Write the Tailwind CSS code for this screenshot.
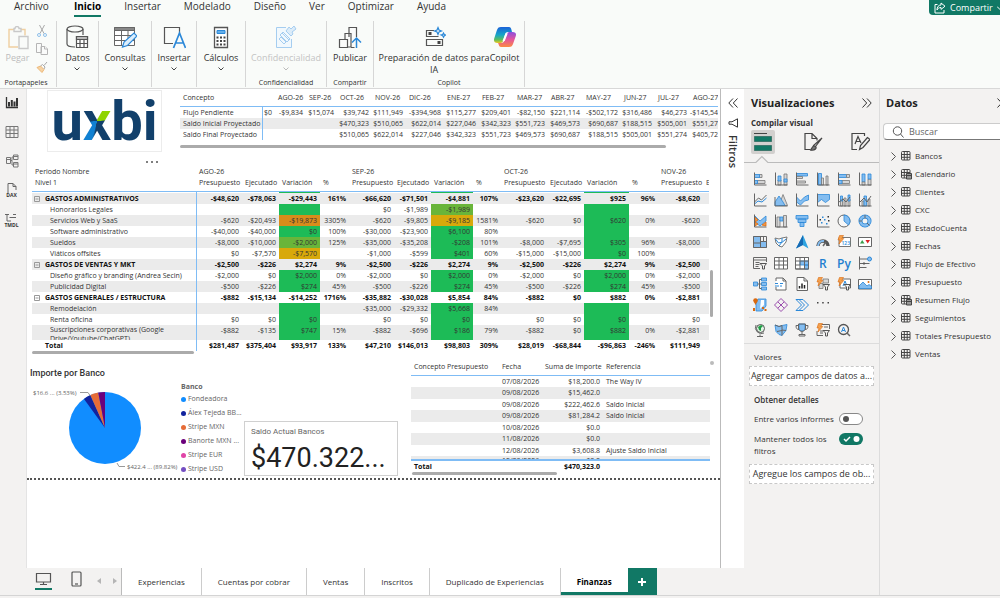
<!DOCTYPE html>
<html lang="es">
<head>
  <meta charset="utf-8">
  <meta name="viewport" content="width=device-width, initial-scale=1">
  <title>Finanzas</title>
  <script src="https://cdn.jsdelivr.net/npm/@tailwindcss/browser@4"></script>
</head>
<body class="flex h-screen flex-col overflow-hidden bg-[#f9fbf9] font-['Open_Sans','Noto_Sans',sans-serif] text-[9px] text-[#333]">

  <!-- menu -->
  <header class="flex h-[17px] shrink-0 items-start justify-between pl-[14px]">
    <nav class="flex gap-[23px] text-[10px] leading-[13px]">
      <a href="#">Archivo</a>
      <a href="#" class="ml-[2px] h-[17px] border-b-2 border-[#117865] font-bold text-black">Inicio</a>
      <a href="#">Insertar</a>
      <a href="#">Modelado</a>
      <a href="#">Diseño</a>
      <a href="#">Ver</a>
      <a href="#">Optimizar</a>
      <a href="#">Ayuda</a>
    </nav>
    <button class="flex h-[15px] w-[71px] shrink-0 items-center gap-1 rounded-bl bg-[#117865] pl-[5px] leading-[14px] text-white">
      <svg class="size-[12px] shrink-0" viewBox="0 0 12 12" fill="none" stroke="#fff"><path d="M3.500 2.500H1v8.500h9V8M7 1l4 3.200-4 3.200V5.500C5 5.500 3.800 6.500 3 8c0-3 1.500-5 4-5z"/></svg>
      <span>Compartir</span>
      <svg class="size-[6px] shrink-0" viewBox="0 0 6 6" fill="none" stroke="#fff"><path d="M0 1.500l3 3 3-3"/></svg>
    </button>
  </header>

  <!-- ribbon -->
  <section class="flex h-[72px] shrink-0 border-b border-[#d8d8d8] pt-1 text-[9px] leading-[12px]">
    <div class="flex h-[66px] w-[57px] flex-col items-center justify-between border-r border-[#d6d6d6]">
      <div class="flex w-full gap-[6px] pl-[5px]">
        <button class="flex w-[25px] flex-col items-center gap-[2px] pt-[5px] text-[#bdbdbd]">
          <svg class="size-6 shrink-0" viewBox="0 0 24 24" fill="none" stroke-width="1.400"><path stroke="#f0cfa0" d="M8 3.500H3v17.500h9M15 3.500h4v6"/><path stroke="#c9c9c9" d="M8 5.500h7V2.500h-2a2 2 0 0 0-4 0H8zM13 10.500h9v12h-9z"/></svg>
          Pegar
        </button>
        <div class="flex flex-col gap-[6px] pt-[4px]">
          <button aria-label="Cortar"><svg class="size-3" viewBox="0 0 12 12" fill="none" stroke="#a9a9a9"><path d="M3.500 0L8 8.500M8.500 0L4 8.500"/><circle cx="3" cy="10" r="1.500" stroke="#8fc0ea"/><circle cx="9" cy="10" r="1.500" stroke="#8fc0ea"/></svg></button>
          <button aria-label="Copiar"><svg class="size-3" viewBox="0 0 12 12" fill="#fafbfa" stroke="#b5b5b5"><path d="M.5.500h5v9h-5zM5 3.500h4l2.500 2.500v5.500H5z"/><path d="M8.500 3.500V6h3"/></svg></button>
          <button aria-label="Copiar formato"><svg class="size-3" viewBox="0 0 12 12" fill="none"><path d="M1 6.500l3.500-1.500 3.500 3.500-2 3z" fill="#f6d3a4" stroke="#edb878"/><path d="M4.500 5l2-1.500 2.500 2.500L8 8M8 4.500L11 1" stroke="#a9a9a9"/></svg></button>
        </div>
      </div>
      <span class="pr-1 text-[7px] leading-[9px]">Portapapeles</span>
    </div>

    <div class="flex h-[66px] w-[42px] flex-col items-center border-r border-[#d6d6d6]">
      <button class="flex flex-col items-center gap-[3px] pt-[4px]">
        <svg class="size-6" viewBox="0 0 24 24" fill="none" stroke="#555" stroke-width="1.200"><path d="M2 4v15c0 2 3 3 8 3M18 4v6"/><ellipse cx="10" cy="4" rx="8" ry="3"/><path fill="#fff" d="M11.500 11.500h11v11h-11z"/><path fill="#bbb" d="M11.500 11.500h11v3h-11z"/><path d="M11.500 18.500h11M15 14v8.500M19 14v8.500"/></svg>
        Datos
        <svg class="h-1 w-[6px]" viewBox="0 0 6 4" fill="none" stroke="#444"><path d="M.5.500L3 3 5.500.500"/></svg>
      </button>
    </div>
    <div class="flex h-[66px] w-[53px] flex-col items-center border-r border-[#d6d6d6]">
      <button class="flex flex-col items-center gap-[3px] pt-[4px]">
        <svg class="size-6" viewBox="0 0 24 24" fill="none" stroke="#666"><path fill="#fff" d="M1.500 2.500h20v18h-20z"/><path fill="#888" d="M1.500 2.500h20v3h-20z"/><path d="M1.500 10.500h20M1.500 15.500h20M8.500 5v15.500M15 5v15.500"/><path fill="#dceefc" stroke="#2b88d8" stroke-width="1.200" d="M9.500 22l1.500-5L21 8l3 3-9.500 9.500z"/></svg>
        Consultas
        <svg class="h-1 w-[6px]" viewBox="0 0 6 4" fill="none" stroke="#444"><path d="M.5.500L3 3 5.500.500"/></svg>
      </button>
    </div>
    <div class="flex h-[66px] w-[45px] flex-col items-center border-r border-[#d6d6d6]">
      <button class="flex flex-col items-center gap-[3px] pt-[4px]">
        <svg class="size-6" viewBox="0 0 24 24" fill="none" stroke="#555" stroke-width="1.200"><path d="M11 18.500H2.500v-16h15v6"/><path stroke="#2b88d8" stroke-width="1.700" d="M11.500 23l6-15 6 15M13.500 18h8"/></svg>
        Insertar
        <svg class="h-1 w-[6px]" viewBox="0 0 6 4" fill="none" stroke="#444"><path d="M.5.500L3 3 5.500.500"/></svg>
      </button>
    </div>
    <div class="flex h-[66px] w-[49px] flex-col items-center border-r border-[#d6d6d6]">
      <button class="flex flex-col items-center gap-[3px] pt-[4px]">
        <svg class="size-6" viewBox="0 0 24 24" fill="none"><path stroke="#555" stroke-width="1.300" fill="#fff" d="M5.500 2.500h13v20h-13z"/><path fill="#63aeea" stroke="#2b88d8" d="M8 5.500h8v3H8z"/><path stroke="#444" stroke-width="2" stroke-dasharray="2 1.500" d="M7.500 12.500h9.500M7.500 16h9.500M7.500 19.500h9.500"/></svg>
        Cálculos
        <svg class="h-1 w-[6px]" viewBox="0 0 6 4" fill="none" stroke="#444"><path d="M.5.500L3 3 5.500.500"/></svg>
      </button>
    </div>
    <div class="flex h-[66px] w-[81px] flex-col items-center justify-between border-r border-[#d6d6d6]">
      <button class="flex flex-col items-center gap-[3px] pt-[4px] text-[#c4c4c4]">
        <svg class="size-6" viewBox="0 0 24 24" fill="none" stroke="#a5cdf0"><path fill="#f1f8fd" d="M12 2.500H2.500v20h15V14"/><path d="M6 10l3-3 7 7-3 3zM5 14l2-2 5 5-2 2zM8 8l7 7"/><path fill="#dcecf9" d="M12 6l5 5 2-2-1-2 4-3-2-3-3 3-2-2z"/></svg>
        Confidencialidad
        <svg class="h-1 w-[6px]" viewBox="0 0 6 4" fill="none" stroke="#bbb"><path d="M.5.500L3 3 5.500.500"/></svg>
      </button>
      <span class="text-[7px] leading-[9px]">Confidencialidad</span>
    </div>
    <div class="flex h-[66px] w-[47px] flex-col items-center justify-between border-r border-[#d6d6d6]">
      <button class="flex flex-col items-center gap-[3px] pt-[4px]">
        <svg class="size-6" viewBox="0 0 24 24" fill="#fafbfa" stroke="#555" stroke-width="1.200"><path d="M11 12V2.500h7.500V12M7 15V8.500h6V22H9.500M1.500 14.500h8V22.500h-8zM13 22.500h3.500"/><path stroke="#2b88d8" stroke-width="1.500" d="M18.500 23V13M14 17.500l4.500-4.500 4.500 4.500" fill="none"/></svg>
        Publicar
      </button>
      <span class="text-[7px] leading-[9px]">Compartir</span>
    </div>
    <div class="flex h-[66px] w-[151px] flex-col items-center justify-between border-r border-[#d6d6d6]">
      <div class="flex whitespace-nowrap">
        <button class="flex flex-col items-center gap-[3px] pt-[4px]">
          <svg class="size-6" viewBox="0 0 24 24" fill="none" stroke="#555" stroke-width="1.200"><path d="M12 5.500H4.500v6h12M4.500 14.500h16v6h-16z"/><path fill="#444" stroke="none" d="M6.500 7h3v3h-3zM15.500 16h3v3h-3z"/><path stroke="#2b88d8" d="M16 2.500l1 2.500 2.500 1-2.500 1-1 2.500L15 7l-2.500-1L15 5zM21.500 8l.8 1.500 1.500.5-1.500.8-.8 1.500-.8-1.500L19 10l1.700-.5z"/></svg>
          <span class="text-center">Preparación de datos para<br>IA</span>
        </button>
        <button class="flex flex-col items-center gap-[3px] pt-[4px]">
          <svg class="size-6" viewBox="0 0 24 24">
            <defs>
              <linearGradient id="cpa" x1="0" y1="0" x2="0" y2="1"><stop offset="0" stop-color="#1b62d8"/><stop offset=".5" stop-color="#16a6c8"/><stop offset=".8" stop-color="#5fbf5a"/><stop offset="1" stop-color="#f2c61f"/></linearGradient>
              <linearGradient id="cpb" x1="0" y1="0" x2="0" y2="1"><stop offset="0" stop-color="#8a4fe0"/><stop offset=".5" stop-color="#e5559c"/><stop offset="1" stop-color="#fb8a42"/></linearGradient>
            </defs>
            <path fill="url(#cpa)" d="M8 2h8c1.500 0 2 1 2.500 3l.5 2h-4c-2 0-2.500 1-3 2.500L10 16c-.5 1.500-1.500 2-3 2H4.500C1.500 18 .5 16 1.200 13.500l2.600-8C4.600 3 5.500 2 8 2z"/>
            <path fill="url(#cpb)" d="M16 22H8c-1.500 0-2-1-2.500-3L5 18h3c2 0 3-1 3.500-2.500L14 9c.5-1.500 1.500-2 3-2h2.500c3 0 4 1.500 3.300 4l-2.600 7.500C19.400 21 18.500 22 16 22z"/>
            <path fill="#fff" d="M12.500 8.500h2.200l-3 7.500H9.500z"/>
          </svg>
          Copilot
        </button>
      </div>
      <span class="text-[7px] leading-[9px]">Copilot</span>
    </div>
  </section>

  <div class="flex min-h-0 flex-1">
    <div class="flex min-w-0 flex-1 flex-col">
      <div class="flex min-h-0 flex-1">
        <!-- view switcher -->
        <nav class="flex w-[27px] shrink-0 flex-col items-center gap-[15px] border-r border-[#e4e4e4] bg-[#f3f2f1] pt-[7px] pr-[3px]">
          <button aria-label="Informe"><svg class="size-[14px]" viewBox="0 0 14 14" fill="none" stroke="#333"><path stroke-width="1.300" d="M1.500 1v10.500H13"/><path stroke-width="2" d="M4 6v4.500M6.800 4v6.500M9.500 5.500v5M12 2v8.500"/></svg></button>
          <button aria-label="Tabla"><svg class="size-[14px]" viewBox="0 0 14 14" fill="none" stroke="#777"><path d="M1 1.500h12v11H1zM1 5h12M1 8.500h12M5 1.500v11M9 1.500v11"/></svg></button>
          <button aria-label="Modelo"><svg class="size-[14px]" viewBox="0 0 14 14" fill="none" stroke="#777"><path d="M1.500 3.500h4v6h-4zM8.500 1h4.500v4.500H8.500zM8.500 8.500h4.500V13H8.500zM5.500 6.500H7V3h1.500M7 6.500V11h1.500M1.500 5.500h4M8.500 2.500H13M8.500 10H13"/></svg></button>
          <button aria-label="Consultas DAX" class="flex flex-col items-center"><svg class="h-[10px] w-[14px]" viewBox="0 0 14 10" fill="none" stroke="#666"><path d="M3 10V.5h5l3 3V7M8 .5v3h3"/></svg><span class="text-[5px] leading-[5px] font-bold">DAX</span></button>
          <button aria-label="TMDL" class="flex flex-col items-center"><svg class="h-[10px] w-[14px]" viewBox="0 0 14 10" fill="none" stroke="#666"><path d="M1 1.500h4M3 1.500V8h4M5.500 4.500H12M9 1.500h3"/></svg><span class="text-[5px] leading-[5px] font-bold">TMDL</span></button>
        </nav>

        <!-- report canvas -->
        <main class="min-w-0 flex-1 overflow-hidden border-r border-[#bbb] bg-white">
          <div class="h-[391px] border-b-2 border-dotted border-[#555]">

            <div class="flex gap-[18px] pl-5">
              <div class="mt-px flex h-[62px] w-[115px] shrink-0 items-center justify-center border border-[#ececec]">
                <span class="flex font-['Roboto'] text-[56px] leading-[60px] font-bold text-[#12406b]">u<span class="bg-[conic-gradient(#12406b_8deg,#8fd400_20deg_82deg,#12406b_90deg_188deg,#1181d2_196deg_262deg,#12406b_268deg)] bg-clip-text text-transparent">x</span>bi</span>
              </div>
              <div class="min-w-0 flex-1 overflow-hidden pt-[3px] pr-[2px] text-[7px] leading-[11px]">
                <div class="overflow-hidden">
                  <table class="w-[545px] table-fixed whitespace-nowrap">
                    <colgroup id="flujo-cols"></colgroup>
                    <thead id="flujo-head"></thead>
                    <tbody id="flujo-body"></tbody>
                  </table>
                </div>
                <div class="mt-[5px] h-[3px] w-[486px] rounded-full bg-[#ababab]"></div>
              </div>
            </div>

            <div class="mt-[5px] flex h-[9px] items-center pl-[119px]">
              <button aria-label="Más opciones" class="flex gap-[3px]"><i class="size-[2px] rounded-full bg-[#555]"></i><i class="size-[2px] rounded-full bg-[#555]"></i><i class="size-[2px] rounded-full bg-[#555]"></i></button>
            </div>

            <div class="flex items-end gap-px pl-[5px]">
              <div class="w-[677px] overflow-hidden text-[7px] leading-[11px]">
                <table class="w-[708px] table-fixed whitespace-nowrap">
                  <colgroup id="gastos-cols"></colgroup>
                  <thead id="gastos-head"></thead>
                  <tbody id="gastos-body"></tbody>
                  <tfoot id="gastos-foot"></tfoot>
                </table>
                <div class="h-[3px] w-[162px] rounded-full bg-[#ababab]"></div>
              </div>
              <div class="mb-[37px] h-[47px] w-[3px] rounded-full bg-[#ababab]"></div>
            </div>

            <div class="flex pt-[7px]">
              <section class="w-[212px] shrink-0">
                <h2 class="pt-[6px] pl-[3px] font-['Roboto'] text-[9px] leading-[12px] font-medium text-[#333]">Importe por Banco</h2>
                <div class="flex pt-px">
                  <svg class="h-[96px] w-[154px] shrink-0" viewBox="27 380 154 96">
                    <circle cx="105" cy="428" r="36" fill="#118dff"/>
                    <path fill="#12239e" d="M105 428L84 399A36 36 0 0 1 90.300 395.100z"/>
                    <path fill="#e66c37" d="M105 428L90.300 395.100A36 36 0 0 1 98.300 392.600z"/>
                    <path fill="#6b007b" d="M105 428L98.300 392.600A36 36 0 0 1 105 392z"/>
                    <path fill="none" stroke="#999" d="M80 392.500h8l2 3M117 463l2 3.500h6"/>
                    <text x="33" y="395" font-size="6" fill="#666">$16.6 ... (3.53%)</text>
                    <text x="127" y="469" font-size="6" fill="#666">$422.4 ... (89.82%)</text>
                  </svg>
                  <ul id="legend" class="min-w-0 shrink-0 pt-[2px] text-[7px] leading-[14px] whitespace-nowrap text-[#666]">
                    <li class="leading-[10px] font-bold">Banco</li>
                  </ul>
                </div>
              </section>
              <section class="mt-[60px] ml-[5px] flex h-[55px] w-[154px] shrink-0 flex-col border border-[#d0d0d0] pt-[4px] pl-[6px]">
                <h2 class="font-['Roboto'] text-[8px] leading-[12px] text-[#666]">Saldo Actual Bancos</h2>
                <span class="pt-[4px] font-['Roboto'] text-[27px] leading-[32px] text-[#222]">$470.322...</span>
              </section>
              <section class="ml-[13px] w-[299px] shrink-0 text-[7px] leading-[11px]">
                <table class="w-full table-fixed whitespace-nowrap">
                  <colgroup><col class="w-[88px]"><col class="w-[43px]"><col class="w-[61px]"><col></colgroup>
                  <thead>
                    <tr class="h-[14px] border-b border-[#7fbcf5] text-left align-top">
                      <th class="px-[3px] font-normal">Concepto Presupuesto</th>
                      <th class="px-[3px] font-normal">Fecha</th>
                      <th class="px-[3px] text-right font-normal">Suma de Importe</th>
                      <th class="px-[3px] font-normal">Referencia</th>
                    </tr>
                  </thead>
                  <tbody id="saldo-body"></tbody>
                  <tfoot>
                    <tr class="h-[12px] border-t-2 border-[#7fbcf5] font-bold text-[#111]">
                      <td class="px-[3px]">Total</td><td></td>
                      <td class="px-[3px] text-right">$470,323.0</td><td></td>
                    </tr>
                  </tfoot>
                </table>
                <div class="ml-px h-[3px] w-[145px] rounded-full bg-[#ababab]"></div>
              </section>
              <i class="size-[4px] rounded-full bg-[#bbb]"></i>
            </div>
          </div>
        </main>

        <!-- filters, collapsed -->
        <aside class="flex w-[23px] shrink-0 flex-col items-center gap-[10px] bg-white pt-[9px]">
          <button aria-label="Expandir filtros"><svg class="size-[10px]" viewBox="0 0 10 10" fill="none" stroke="#333"><path d="M5 .5L.8 5 5 9.500M9.500.5L5.300 5l4.200 4.500"/></svg></button>
          <svg class="size-[10px]" viewBox="0 0 10 10" fill="none" stroke="#333"><path d="M9.500.8v8.400L4 6.200H1V3.800h3z"/></svg>
          <span class="-mt-[3px] text-[11px] leading-[14px] font-semibold [writing-mode:vertical-rl]">Filtros</span>
        </aside>
      </div>

      <!-- page tabs -->
      <footer class="flex h-[27px] shrink-0 items-stretch bg-[#f3f2f1] pl-[27px]">
        <div class="flex w-[95px] items-start border-r border-[#bbb] pt-[3px] pl-2">
          <button aria-label="Escritorio" class="flex flex-col items-center gap-[3px] border-b-2 border-[#117865] pb-[2px]"><svg class="h-[15px] w-[17px]" viewBox="0 0 17 15" fill="none" stroke="#555" stroke-width="1.200"><path d="M1.500 2.500h14v8.500h-14zM8.500 11v2.500M5 13.500h7"/></svg></button>
          <button aria-label="Móvil" class="ml-[19px]"><svg class="h-4 w-[11px]" viewBox="0 0 11 16" fill="none" stroke="#555" stroke-width="1.200"><rect x="1" y="1" width="9" height="14" rx="1"/><path d="M4 13h3"/></svg></button>
          <span class="flex gap-3 pt-[7px] pl-[15px]">
            <svg class="h-[6px] w-1" viewBox="0 0 4 6" fill="#b5b5b5"><path d="M4 0v6L0 3z"/></svg>
            <svg class="h-[6px] w-1" viewBox="0 0 4 6" fill="#b5b5b5"><path d="M0 0v6l4-3z"/></svg>
          </span>
        </div>
        <nav class="flex items-stretch bg-white text-[8px]">
          <a href="#" class="flex items-center border-r border-[#ccc] px-4">Experiencias</a>
          <a href="#" class="flex items-center border-r border-[#ccc] px-4">Cuentas por cobrar</a>
          <a href="#" class="flex items-center border-r border-[#ccc] px-4">Ventas</a>
          <a href="#" class="flex items-center border-r border-[#ccc] px-4">Inscritos</a>
          <a href="#" class="flex items-center border-r border-[#ccc] px-4">Duplicado de Experiencias</a>
          <a href="#" class="flex items-center border-b-3 border-[#117865] px-4 pt-[3px] font-bold text-black">Finanzas</a>
        </nav>
        <button aria-label="Nueva página" class="flex w-[29px] items-center justify-center bg-[#117865]"><svg class="size-[8px]" viewBox="0 0 8 8" stroke="#fff" stroke-width="2"><path d="M4 0v8M0 4h8"/></svg></button>
      </footer>
    </div>

    <!-- visualizations -->
    <aside class="flex w-[136px] shrink-0 flex-col border-r border-[#dcdcdc] bg-[#f3f2f1]">
      <div class="flex items-center justify-between pt-[6px] pr-[7px] pl-[7px]">
        <h2 class="text-[11px] leading-4 font-bold text-[#222]">Visualizaciones</h2>
        <button aria-label="Contraer"><svg class="size-[10px]" viewBox="0 0 10 10" fill="none" stroke="#333"><path d="M.5.500L4.700 5 .5 9.500M5 .5L9.200 5 5 9.500"/></svg></button>
      </div>
      <h3 class="pt-[5px] pl-[7px] text-[8px] leading-[13px] font-bold">Compilar visual</h3>
      <div class="flex items-center justify-between pt-[1px] pr-[9px] pl-[7px]">
        <button aria-label="Compilar" class="rounded-xs bg-[#d2d0ce] p-px"><svg class="size-[22px]" viewBox="0 0 22 22"><path stroke="#444" d="M2 2.500h13"/><path fill="#117865" stroke="#0b4a3e" stroke-dasharray="1 1" d="M2.500 5.500h17v5h-17zM2.500 14.500h17v5h-17z"/></svg></button>
        <button aria-label="Formato"><svg class="size-[20px]" viewBox="0 0 20 20" fill="none" stroke="#444" stroke-width="1.200"><path d="M7 17.500H2v-16h7l5 5v2M9 1.500v5h5"/><path d="M19 6l-7 9-1.500-1.500z"/><path d="M7 18c2 0 1.500-4 4-4s2.500 2 1.500 3-3 1.500-5.500 1z" fill="#777"/></svg></button>
        <button aria-label="Análisis"><svg class="size-[20px]" viewBox="0 0 20 20" fill="none" stroke="#444" stroke-width="1.200"><path d="M14.500 4V1.500H2v16h5M5 12l3-7.500L11 11M6 9.500h4"/><path d="M17.500 5.500l-7 8-1 4 3.500-2 7-8z"/></svg></button>
      </div>
      <svg class="h-[10px] w-full shrink-0" viewBox="0 0 136 10" fill="none" stroke="#bbb"><path d="M0 8.500h12l6-6 6 6h112" stroke-width="1.200"/></svg>
      <div id="visuals" class="mt-[4px] grid grid-cols-[repeat(6,21px)] auto-rows-[21px] pl-[5px]"></div>
      <div id="more-visuals" class="mt-[2px] ml-[5px] grid grid-cols-[repeat(6,21px)] auto-rows-[21px] border-t border-[#e0e0e0] pt-px"></div>
      <div class="mt-[3px] flex flex-col border-t border-[#dcdcdc] pt-[6px] pr-[5px] pl-[5px] leading-[12px]">
        <h3 class="pl-[5px] text-[8px] leading-[13px]">Valores</h3>
        <button class="mt-[3px] border border-dashed border-[#c8c8c8] bg-white text-center leading-[18px] whitespace-nowrap">Agregar campos de datos a...</button>
        <h3 class="pt-2 pl-[5px] text-[8px] font-semibold">Obtener detalles</h3>
        <div class="flex items-center justify-between pt-[7px] pr-[11px] pl-[5px] text-[8px] whitespace-nowrap">
          <label for="cross-report">Entre varios informes</label>
          <span class="relative flex shrink-0">
            <input id="cross-report" type="checkbox" class="h-3 w-6 appearance-none rounded-full border border-[#888] bg-white checked:border-[#117865] checked:bg-[#117865]">
            <i class="pointer-events-none absolute top-[3px] left-[4px] size-[6px] rounded-full bg-[#555]"></i>
          </span>
        </div>
        <div class="flex items-start justify-between pt-2 pr-[11px] pl-[5px] text-[8px]">
          <label for="keep-filters" class="w-[82px]">Mantener todos los<br>filtros</label>
          <span class="relative flex shrink-0">
            <input id="keep-filters" type="checkbox" checked class="h-3 w-6 appearance-none rounded-full bg-[#117865]">
            <svg class="pointer-events-none absolute top-0 left-0 h-3 w-6" viewBox="0 0 24 12" fill="none"><path stroke="#fff" stroke-width="1.500" d="M5 6l2 2 4-4"/><circle cx="17.500" cy="6" r="3" fill="#fff"/></svg>
          </span>
        </div>
        <button class="mt-[7px] border border-dashed border-[#c8c8c8] bg-white text-center leading-[18px] whitespace-nowrap">Agregue los campos de ob...</button>
      </div>
    </aside>

    <!-- data -->
    <aside class="flex w-[120px] shrink-0 flex-col overflow-hidden bg-[#f3f2f1] pt-[6px]">
      <div class="flex items-center justify-between pl-[6px]">
        <h2 class="text-[11px] leading-4 font-bold text-[#222]">Datos</h2>
        <svg class="h-[10px] w-[3px]" viewBox="0 0 3 10" fill="none" stroke="#333"><path d="M.5.500L4.700 5 .5 9.500"/></svg>
      </div>
      <label class="mt-3 ml-[3px] flex h-[17px] items-center gap-[5px] rounded-l-sm border border-r-0 border-[#ccc] border-b-[#777] bg-white pl-2">
        <svg class="size-3 shrink-0" viewBox="0 0 12 12" fill="none" stroke="#555"><circle cx="5.500" cy="5" r="4.200"/><path d="M8.500 8l3 3.500"/></svg>
        <input type="search" placeholder="Buscar" aria-label="Buscar" class="w-full min-w-0 text-[9px] outline-none placeholder:text-[#666]">
      </label>
      <ul id="tables" class="mt-[7px] text-[8px] leading-[18px] whitespace-nowrap"></ul>
    </aside>
  </div>
  <div class="h-[3px] shrink-0 border-t border-[#d4d4d4] bg-[#f3f2f1]"></div>

  <script>
    const $ = (id) => document.getElementById(id);
    const cols = (widths) => widths.map((w) => `<col style="width:${w}px">`).join('');

    // cash flow
    $('flujo-cols').innerHTML = cols([82, 13, 31, 31, 35, 34, 38, 35, 35, 34, 35, 38, 34, 35, 35]);
    const months = ['', 'AGO-26', 'SEP-26', 'OCT-26', 'NOV-26', 'DIC-26', 'ENE-27', 'FEB-27', 'MAR-27', 'ABR-27', 'MAY-27', 'JUN-27', 'JUL-27', 'AGO-27'];
    $('flujo-head').innerHTML = `<tr class="h-[14px] border-b border-[#7fbcf5] text-left align-top">
      <th class="px-[3px] font-normal">Concepto</th>${months.map((m) => `<th class="px-[3px] font-normal">${m}</th>`).join('')}</tr>`;
    const flujo = [
      ['Flujo Pendiente', '$0', '-$9,834', '$15,074', '$39,742', '$111,949', '-$394,968', '$115,277', '$209,401', '-$82,150', '$221,114', '-$502,172', '$316,486', '$46,273', '-$145,547'],
      ['Saldo Inicial Proyectado', '', '', '', '$470,323', '$510,065', '$622,014', '$227,046', '$342,323', '$551,723', '$469,573', '$690,687', '$188,515', '$505,001', '$551,274'],
      ['Saldo Final Proyectado', '', '', '', '$510,065', '$622,014', '$227,046', '$342,323', '$551,723', '$469,573', '$690,687', '$188,515', '$505,001', '$551,274', '$405,727'],
    ];
    $('flujo-body').innerHTML = flujo.map(([name, ...cells]) => `<tr class="h-[11px] even:bg-[#ebebeb]">
      <td class="border-r border-[#7fbcf5] pl-[3px]">${name}</td>${cells.map((c) => `<td class="pr-[3px] text-right">${c}</td>`).join('')}</tr>`).join('');

    // budget matrix
    $('gastos-cols').innerHTML = cols([164, 46, 37, 41, 29, 45, 37, 42, 28, 46, 37, 45, 29, 45, 37]);
    const measures = ['Presupuesto', 'Ejecutado', 'Variación', '%'];
    $('gastos-head').innerHTML = `
      <tr class="h-[11px] text-left"><th class="px-[3px] font-normal">Periodo Nombre</th>
        ${['AGO-26', 'SEP-26', 'OCT-26'].map((m) => `<th colspan="4" class="px-[3px] font-normal">${m}</th>`).join('')}
        <th colspan="2" class="px-[3px] font-normal">NOV-26</th></tr>
      <tr class="h-[14px] border-b border-[#7fbcf5] text-left align-top"><th class="px-[3px] font-normal">Nivel 1</th>
        ${[...measures, ...measures, ...measures, 'Presupuesto', 'Ejecutado'].map((m) => `<th class="px-[3px] font-normal">${m}</th>`).join('')}</tr>`;
    const fills = { g: 'bg-[#1dbb57]', l: 'bg-[#69b53a]', y: 'bg-[#d8a90b]', o: 'bg-[#d88c1b]' };
    // name, group flag, fill per variance column, cells
    const gastos = [
      ['GASTOS ADMINISTRATIVOS', 1, '', '-$48,620|-$78,063|-$29,443|161%|-$66,620|-$71,501|-$4,881|107%|-$23,620|-$22,695|$925|96%|-$8,620'],
      ['Honorarios Legales', 0, 'glg', '||||$0|-$1,989|-$1,989||||||'],
      ['Servicios Web y SaaS', 0, 'oyg', '-$620|-$20,493|-$19,873|3305%|-$620|-$9,805|-$9,185|1581%|-$620|$0|$620|0%|-$620'],
      ['Software administrativo', 0, 'ggg', '-$40,000|-$40,000|$0|100%|-$30,000|-$23,900|$6,100|80%|||||'],
      ['Sueldos', 0, 'lgg', '-$8,000|-$10,000|-$2,000|125%|-$35,000|-$35,208|-$208|101%|-$8,000|-$7,695|$305|96%|-$8,000'],
      ['Viáticos offsites', 0, 'ygg', '$0|-$7,570|-$7,570||-$1,000|-$599|$401|60%|-$15,000|-$15,000|$0|100%|'],
      ['GASTOS DE VENTAS Y MKT', 1, '', '-$2,500|-$226|$2,274|9%|-$2,500|-$226|$2,274|9%|-$2,500|-$226|$2,274|9%|-$2,500'],
      ['Diseño gráfico y branding (Andrea Secin)', 0, 'ggg', '-$2,000|$0|$2,000|0%|-$2,000|$0|$2,000|0%|-$2,000|$0|$2,000|0%|-$2,000'],
      ['Publicidad Digital', 0, 'ggg', '-$500|-$226|$274|45%|-$500|-$226|$274|45%|-$500|-$226|$274|45%|-$500'],
      ['GASTOS GENERALES / ESTRUCTURA', 1, '', '-$882|-$15,134|-$14,252|1716%|-$35,882|-$30,028|$5,854|84%|-$882|$0|$882|0%|-$2,881'],
      ['Remodelación', 0, 'ggg', '||||-$35,000|-$29,332|$5,668|84%|||||'],
      ['Renta oficina', 0, 'ggg', '$0|$0|$0||$0|$0|$0||$0|$0|$0||$0'],
      ['<div class="h-[15px] overflow-hidden leading-[9px]">Suscripciones corporativas (Google<br>Drive/Youtube/ChatGPT)</div>', 0, 'ggg', '-$882|-$135|$747|15%|-$882|-$696|$186|79%|-$882|$0|$882|0%|-$2,881'],
    ];
    const box = '<svg class="mr-[5px] size-[6px] shrink-0" viewBox="0 0 6 6" fill="none" stroke="#999"><path d="M.5.500h5v5h-5zM1.500 3h3"/></svg>';
    const cell = (c, i, f) => `<td class="pr-[3px] text-right ${i % 4 === 2 ? fills[f[(i - 2) / 4]] || '' : ''}">${c}</td>`;
    const strip = Array.from({ length: 14 }, (_, i) => `<td class="${i % 4 === 2 ? 'bg-[#1dbb57]' : ''}"></td>`).join('');
    $('gastos-body').innerHTML = `<tr class="h-[2px]"><td class="border-r border-[#7fbcf5]"></td>${strip}</tr>` +
      gastos.map(([name, group, f, cells]) => `<tr class="h-[11px] align-top even:bg-[#ebebeb] ${group ? 'font-bold text-[#111]' : ''}">
        <td class="border-r border-[#7fbcf5] ${group ? 'pl-[2px]' : 'pl-[18px]'}">${group ? `<div class="flex items-center">${box}${name}</div>` : name}</td>
        ${cells.split('|').map((c, i) => cell(c, i, f)).join('')}<td></td></tr>`).join('');
    $('gastos-foot').innerHTML = `<tr class="h-[11px] font-bold text-[#111]"><td class="border-r border-[#7fbcf5] pl-[13px]">Total</td>
      ${'$281,487|$375,404|$93,917|133%|$47,210|$146,013|$98,803|309%|$28,019|-$68,844|-$96,863|-246%|$111,949'.split('|').map((c) => `<td class="pr-[3px] text-right">${c}</td>`).join('')}<td></td></tr>`;

    // balances
    const saldos = [
      ['07/08/2026', '$18,200.0', 'The Way IV'], ['09/08/2026', '$15,462.0', ''], ['09/08/2026', '$222,462.6', 'Saldo Inicial'],
      ['09/08/2026', '$81,284.2', 'Saldo Inicial'], ['10/08/2026', '$0.0', ''], ['11/08/2026', '$0.0', ''], ['12/08/2026', '$3,608.8', 'Ajuste Saldo Inicial'],
    ];
    $('saldo-body').innerHTML = saldos.map(([d, v, r]) => `<tr class="odd:h-[11px] even:h-[12px] even:bg-[#ebebeb]">
      <td></td><td class="px-[3px]">${d}</td><td class="px-[3px] text-right">${v}</td><td class="px-[3px]">${r}</td></tr>`).join('') +
      `<tr class="bg-[#ebebeb]"><td></td><td class="px-[3px]"><div class="h-[3px] overflow-hidden leading-[9px]">12/08/2026</div></td><td class="px-[3px] text-right"><div class="h-[3px] overflow-hidden leading-[9px]">$0.0</div></td><td></td></tr>`;

    // legend
    $('legend').innerHTML += [['#118dff', 'Fondeadora'], ['#12239e', 'Álex Tejeda BB...'], ['#e66c37', 'Stripe MXN'], ['#6b007b', 'Banorte MXN ...'], ['#e044a7', 'Stripe EUR'], ['#744ec2', 'Stripe USD']]
      .map(([c, t]) => `<li class="flex items-center gap-[2px]"><i class="size-[5px] rounded-full" style="background:${c}"></i>${t}</li>`).join('');

    // visual gallery icons, 14x14; k = dark stroke, b = blue stroke, l = light blue fill, h = grey fill
    const k = (d, x = '') => `<path stroke="#666" d="${d}" ${x}/>`;
    const b = (d, x = '') => `<path stroke="#2b88d8" d="${d}" ${x}/>`;
    const l = (d) => `<path fill="#84bdf0" stroke="#2b88d8" stroke-width=".8" d="${d}"/>`;
    const h = (d) => `<path fill="#d5d5d5" stroke="#777" stroke-width=".8" d="${d}"/>`;
    const t = (x, y, s, c, v) => `<text x="${x}" y="${y}" font-size="${s}" font-weight="600" fill="${c}">${v}</text>`;
    const bolt = '<path fill="#f5a04c" stroke="#d9690f" stroke-width=".6" d="M2.500.500h4L4.800 3.500h2L2 9l1-4H1z"/>';
    const funnel = '<path fill="#f3f2f1" stroke="#555" d="M7 7.500h6.500L11.500 10v3h-2v-3z"/>';
    const axis = 'M1.500.500v12.500h12';
    const visuals = [
      ['Barras apiladas', h('M6 2.500h3v3H6z') + l('M1.500 2.500h5v3h-5z') + h('M4 8.500h8v3H4z') + l('M1.500 8.500h3v3h-3z') + k(axis)],
      ['Columnas apiladas', h('M4 8h3v5H4z') + l('M4 4h3v5H4z') + h('M10 2h3v11h-3z') + l('M10 7h3v3h-3z') + k(axis)],
      ['Barras agrupadas', l('M1.500 1.500h11v2.500h-11z') + h('M1.500 4.500h6v2h-6zM1.500 9h9v2h-9z') + k(axis)],
      ['Columnas agrupadas', l('M2.500 1.500h3V13h-3z') + h('M5.500 6h2v7h-2zM10 4h2v9h-2z') + k(axis)],
      ['Barras 100%', l('M1.500 2.500h8v3h-8z') + h('M9.500 2.500h3v3h-3zM5 8.500h7.500v3H5z') + l('M1.500 8.500H5v3H1.500z') + k(axis)],
      ['Columnas 100%', l('M4 2h3v8H4z') + h('M4 10h3v3H4zM10 7h3v6h-3z') + l('M10 2h3v5h-3z') + k(axis)],
      ['Líneas', k('M1.500 9l4-4 3 2 5-5') + b('M1.500 11l3.500-3 4 1 4.500-4') + k(axis)],
      ['Áreas', h('M5 12.500L9 1.500l4.500 11z') + l('M1 12.500V9l4-6 4 6 2 3.500z') + k('M1 4v9h12.500')],
      ['Áreas apiladas', l('M1.500 4l4 4 4-4 4-2v5l-4 1-4 4-4-3z') + k(axis)],
      ['Áreas 100%', l('M1.500 1.500h12v5l-4 3-4-3-4 3z') + k(axis)],
      ['Línea y columnas apiladas', h('M3.500 6h2v7h-2zM7 5h2v8H7zM11 6h2v7h-2z') + l('M3.500 3h2v5h-2zM11 2h2v6h-2z') + k('M2 9l4-3 3 3 4-5') + k(axis)],
      ['Línea y columnas agrupadas', h('M4 8h2v5H4zM10 6h2v7h-2z') + l('M6 3h2.500v10H6z') + k('M2 9l4-4 3 4 4-6') + k(axis)],
      ['Cinta', l('M2 2l5 5 6-5v5l-6 5-5-4z') + '<path fill="#f29a4a" stroke="#d9690f" stroke-width=".8" d="M2 8l3 2-3 2zM13 8l-4 3 4 1zM2 3l3 3-3 2z"/>' + k(axis)],
      ['Cascada', h('M3 3h3v10H3z') + l('M6 3h3v4H6z') + h('M9.500 1.500h3V13h-3z') + k(axis)],
      ['Embudo', l('M1 1.500h12v3.500H1zM3 5h8v3.500H3zM5 8.500h4v4H5z')],
      ['Dispersión', k(axis) + '<path fill="#2b88d8" d="M5 8h1.500v1.500H5zM8 5h1.500v1.500H8zM10 9h1.500v1.500H10zM6 2.500h1.500V4H6z"/><path fill="#333" d="M3.500 5H5v1.500H3.500zM11.500 2H13v1.500h-1.500zM12 6h1.500v1.500H12z"/>'],
      ['Circular', '<circle cx="7" cy="7" r="6" stroke="#666" fill="#f7f7f7"/>' + l('M7 1a6 6 0 0 1 4.500 10L7 7z')],
      ['Anillo', '<circle cx="7" cy="7" r="4.500" stroke="#2b88d8" stroke-width="4"/><circle cx="7" cy="7" r="4.500" stroke="#84bdf0" stroke-width="2.500"/>' + k('M7 1v3.500M1 7h3M9 9l2.500 2.500')],
      ['Treemap', l('M.5 1.500h7v11h-7z') + l('M7.500 6.500h6v6h-6z') + k('M.5 1.500h13v11H.5zM7.500 1.500v11M.5 8h7M7.500 6.500h6M10.500 1.500v5')],
      ['Mapa', '<path fill="#fff" stroke="#777" d="M1 3l4 1 3-1 5-1-1 5-4 5-3-1-3-3z"/>' + b('M1.500 4l3 4 4-1 3.500-3M5 11l3-4M8 3v4')],
      ['Mapa de Azure', '<path fill="#2fa3e0" d="M8 0l5.500 13.500L7.500 10 1 13.500z"/><path fill="#1569b3" d="M8 0v10l-7 3.500z"/>'],
      ['Medidor', '<path stroke="#555" stroke-width="3.500" d="M2 11a5 5 0 0 1 10 0"/><path stroke="#84bdf0" stroke-width="2" d="M2 11a5 5 0 0 1 6-5"/>' + k('M7 11l3-4', 'stroke-width="1.500"')],
      ['Tarjeta', '<path fill="#fff" stroke="#777" d="M2 2.500h11.500v9H2z"/>' + t(4.5, 9.5, 5, '#2b88d8', '123') + bolt],
      ['KPI', k('M.5 2.500h13v9H.5z', 'fill="#fff"') + '<path fill="#3a9e4c" d="M2 8.500h4.500L4.200 5z"/><path fill="#d22" d="M7.500 5H12L9.700 8.500z"/>'],
      ['Segmentación', k('M13.500 6V1.500H.5v11H7M.5 4h13M2.500 6.500h4M2.500 8.500h4M2.500 10.500h3') + funnel],
      ['Tabla', k('M.5 1.500h13v11.500H.5zM.5 5h13M.5 9h13M5 1.500V13M9.500 1.500V13', 'fill="#fff"')],
      ['Matriz', k('M.5 1.500h13v11.500H.5z', 'fill="#fff"') + l('M5 5h4.500v4H5zM9.500 9h4v4h-4zM9.500 5h4v4h-4z') + k('M.5 1.500h13V13H.5zM.5 5h13M.5 9H5M5 1.500V13M9.500 1.500V13')],
      ['Script R', t(3, 11.5, 12, '#1f7fd0', 'R')],
      ['Python', t(0, 11.5, 12, '#1f7fd0', 'Py')],
      ['Influenciadores', k('M1.500.500v13M1.500 3h8M1.500 7.500h10M1.500 11.500h7') + '<circle cx="11.500" cy="3" r="2" fill="#84bdf0" stroke="#2b88d8"/><circle cx="6" cy="7.500" r=".8" stroke="#555"/>'],
      ['Árbol', l('M.5 5h4v4h-4zM8.500 1h5v3h-5zM8.500 5.500h5v3h-5zM8.500 10h5v3h-5z') + k('M4.500 7h4M6.500 2.500v9M6.500 2.500h2M6.500 11.500h2')],
      ['Preguntas', k('M2 4V1h7l3 3v9H2v-3M9 1v3h3', 'fill="#fff"') + b('M1 6.500h3M6 6.500h3M1 9h4M6 9h2')],
      ['Narrativa', k('M2 .5h7l3.500 3.500v9.500H2zM9 .5V4h3.500', 'fill="#fff"') + '<path stroke="#222" stroke-width="1.500" d="M4.500 11.500V9M7 11.500V6.500M9.500 11.500V8"/>'],
      ['Segmentación de botones', h('M7 2h5.500v4H7zM3 6.500h4v5H3z') + bolt + funnel],
      ['Segmentación de texto', k('M3 2h10.500v9H3z', 'fill="#fff"') + b('M6 9l2-5 2 5') + bolt + funnel],
      ['Imagen', k('M.5 2.500h13v9.500H.5z', 'fill="#fff"') + l('M1 11.500V9l4-4 4 4 2-1.500 2.500 2v2z') + '<circle cx="10.500" cy="5" r="1" fill="#d9690f"/>'],
      ['ArcGIS', l('M3 5l2-4h8v7L9 13H3z') + '<path fill="#fff" d="M8 2h3v5L7 11z"/><circle cx="2.500" cy="2.500" r="2.300" fill="#d9690f"/><path fill="#d9690f" d="M1 4h3l-1.500 3zM9 9h2v2H9zM11.500 11h2v2h-2zM0 10h2v3H0z"/>'],
      ['Power Apps', '<path stroke="#9b4dae" d="M7 .5L13.500 7 7 13.500.5 7zM3.800 3.800l6.400 6.400M10.200 3.800L3.800 10.200"/>'],
      ['Power Automate', b('M1 1.500h7L13.500 7 8 12.500H1L6.500 7zM4 1.500L9.500 7 4 12.500')],
      ['Más visuales', '<path fill="#444" d="M1 4h1.500v1.500H1zM6.200 4h1.500v1.500H6.200zM11.500 4H13v1.500h-1.500z"/>'],
    ];
    const more = [
      ['Globo', '<circle cx="7.500" cy="5.500" r="4" fill="#e3f3e6" stroke="#555"/><path fill="#1f9e45" d="M5 4l3-2 2 1-2 2v3l-2-1z"/>' + k('M3 2a6 6 0 0 0 8 8M7 11.500v1.500M4 13.500h6')],
      ['Mapa coroplético', l('M1 2l4 1.500 3-1 5-1-1 6-4 5-3-1-3-3z') + k('M1 2l4 1.500 3-1v5l-5 1M8 7l4 .5M8 7v5.500')],
      ['Métricas', l('M4 1h6v4c0 4-6 4-6 0z') + k('M3.500 1h7v4c0 4.500-7 4.500-7 0zM3.500 2.500H1c0 3 1 4 3 4M10.500 2.500H13c0 3-1 4-3 4M7 8.500v3M4 13h6v-1.500H4z')],
      ['Segmentación de lista', k('M4 1.500h9.500V6M1 8v4.500h6M8 4h4M4 8h3M4 10h3') + bolt + funnel],
      ['Búsqueda', '<circle cx="6.500" cy="6.500" r="5" stroke="#555" stroke-width="1.300"/>' + b('M4.500 9l2-5 2 5M5.200 7.500h2.600') + k('M10 10l3 3', 'stroke-width="1.500"')],
    ];
    const icon = ([label, body]) => `<button aria-label="${label}" class="flex items-center justify-center"><svg class="size-[14px] overflow-visible" viewBox="0 0 14 14" fill="none">${body}</svg></button>`;
    $('visuals').innerHTML = visuals.map(icon).join('');
    $('more-visuals').innerHTML = more.map(icon).join('');

    // model tables
    const calculated = ['Calendario', 'Resumen Flujo'];
    $('tables').innerHTML = ['Bancos', 'Calendario', 'Clientes', 'CXC', 'EstadoCuenta', 'Fechas', 'Flujo de Efectivo', 'Presupuesto', 'Resumen Flujo', 'Seguimientos', 'Totales Presupuesto', 'Ventas']
      .map((n) => `<li><a href="#" class="flex h-[18px] items-center pl-[11px]">
        <svg class="mr-[5px] h-[9px] w-[5px] shrink-0" viewBox="0 0 5 9" fill="none" stroke="#555"><path d="M.5.500l4 4-4 4"/></svg>
        <svg class="mr-1 size-[10px] shrink-0 overflow-visible" viewBox="0 0 10 10" fill="none" stroke="#444"><rect x=".5" y=".5" width="8.500" height="8.500" rx="1"/><path d="M.5 3.500H9M.5 6.300H9M3.300.500V9M6.200.500V9"/>${calculated.includes(n) ? '<path fill="#999" d="M5.500 4.500h5v5.500h-5zM5.500 6.500h5"/>' : ''}</svg>${n}</a></li>`).join('');
  </script>
</body>
</html>
